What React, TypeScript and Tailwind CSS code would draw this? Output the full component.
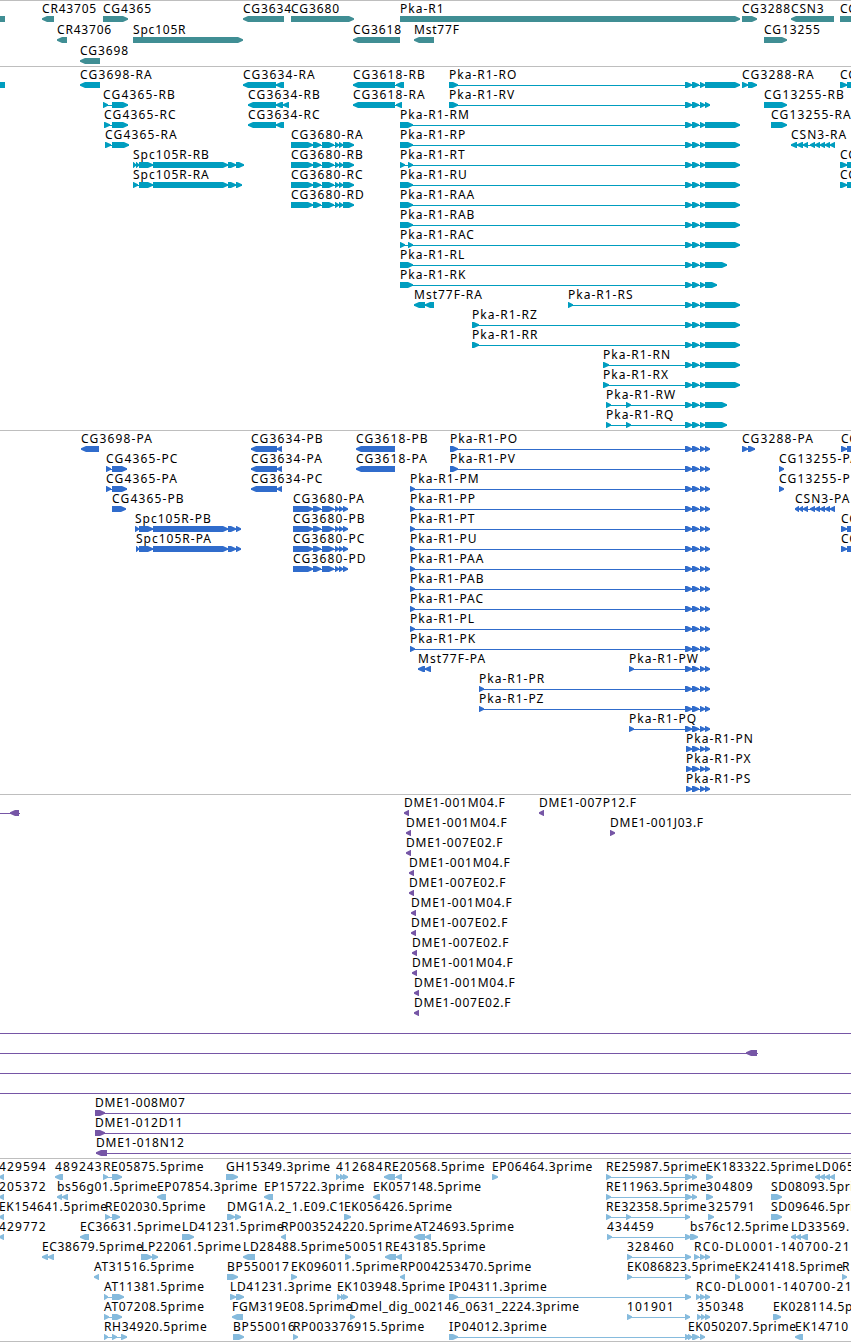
type Dir = "L" | "R";
// row, direction, label, exon coordinates (pairs), optional line span
type Feature = [number, Dir, string, number[], [number, number]?];

interface TrackProps {
  features: Feature[];
  rows: number;
  color: string;
  height: string;
  rowHeight: string;
}

const WIDTH = 851;

const genes: Feature[] = [
  [0, "L", "", [-10, 5]],
  [0, "L", "CR43705", [42, 54]],
  [0, "R", "CG4365", [103, 128]],
  [0, "L", "CG3634", [243, 284]],
  [0, "R", "CG3680", [291, 354]],
  [0, "R", "Pka-R1", [400, 740]],
  [0, "R", "CG3288", [742, 757]],
  [0, "L", "CSN3", [791, 834]],
  [0, "R", "CG", [840, 880]],
  [1, "L", "CR43706", [57, 67]],
  [1, "R", "Spc105R", [133, 243]],
  [1, "L", "CG3618", [353, 400]],
  [1, "L", "Mst77F", [414, 434]],
  [1, "R", "CG13255", [764, 787]],
  [2, "L", "CG3698", [80, 100]],
];

// 3' exons shared by the Pka-R1 isoforms
const core = [685, 692, 692, 699, 700, 705];
const full = [...core, 705, 740];
const mid = [...core, 705, 727];
const cds = [...core, 705, 710];
const cg3680 = [291, 313, 313, 321, 322, 334, 335, 339, 339, 343, 343, 354];
const cg3680p = [293, 313, 313, 321, 322, 334, 335, 339, 339, 343, 343, 348];
const edge = [840, 847, 847, 880];
const edgeP = [841, 847, 847, 880];

const transcripts: Feature[] = [
  [0, "L", "", [-10, 5]],
  [0, "L", "CG3698-RA", [80, 100]],
  [0, "L", "CG3634-RA", [243, 276, 276, 284]],
  [0, "L", "CG3618-RB", [353, 395, 396, 404]],
  [0, "R", "Pka-R1-RO", [449, 458, ...full]],
  [0, "R", "CG3288-RA", [742, 748, 748, 757]],
  [0, "R", "CG", edge],
  [1, "R", "CG4365-RB", [103, 108, 112, 128]],
  [1, "L", "CG3634-RB", [248, 276, 276, 283, 283, 289]],
  [1, "L", "CG3618-RA", [353, 395, 396, 402]],
  [1, "R", "Pka-R1-RV", [449, 458, ...cds]],
  [1, "R", "CG13255-RB", [764, 787]],
  [2, "R", "CG4365-RC", [104, 110, 112, 128]],
  [2, "L", "CG3634-RC", [248, 276, 276, 284]],
  [2, "R", "Pka-R1-RM", [400, 413, ...full]],
  [2, "R", "CG13255-RA", [771, 787]],
  [3, "R", "CG4365-RA", [105, 111, 112, 129]],
  [3, "R", "CG3680-RA", cg3680],
  [3, "R", "Pka-R1-RP", [400, 413, ...full]],
  [3, "L", "CSN3-RA", [791, 797, 797, 803, 803, 808, 810, 815, 815, 820, 820, 825, 825, 830, 830, 835]],
  [4, "R", "Spc105R-RB", [133, 136, 136, 139, 139, 153, 153, 228, 228, 236, 236, 244]],
  [4, "R", "CG3680-RB", cg3680],
  [4, "R", "Pka-R1-RT", [400, 405, 408, 413, ...full]],
  [4, "R", "CG", edge],
  [5, "R", "Spc105R-RA", [133, 138, 139, 153, 153, 228, 228, 236, 236, 242]],
  [5, "R", "CG3680-RC", cg3680],
  [5, "R", "Pka-R1-RU", [400, 413, ...full]],
  [5, "R", "CG", edge],
  [6, "R", "CG3680-RD", cg3680],
  [6, "R", "Pka-R1-RAA", [400, 413, ...full]],
  [7, "R", "Pka-R1-RAB", [400, 413, ...full]],
  [8, "R", "Pka-R1-RAC", [400, 405, 408, 413, ...full]],
  [9, "R", "Pka-R1-RL", [400, 413, ...mid]],
  [10, "R", "Pka-R1-RK", [400, 413, ...core, 705, 717]],
  [11, "L", "Mst77F-RA", [414, 425, 425, 434]],
  [11, "R", "Pka-R1-RS", [568, 573, ...full]],
  [12, "R", "Pka-R1-RZ", [472, 479, ...full]],
  [13, "R", "Pka-R1-RR", [472, 479, ...full]],
  [14, "R", "Pka-R1-RN", [603, 609, ...full]],
  [15, "R", "Pka-R1-RX", [603, 609, ...full]],
  [16, "R", "Pka-R1-RW", [606, 611, 626, 631, ...mid]],
  [17, "R", "Pka-R1-RQ", [606, 611, 626, 631, ...mid]],
];

const proteins: Feature[] = [
  [0, "L", "CG3698-PA", [81, 99]],
  [0, "L", "CG3634-PB", [251, 277, 277, 282]],
  [0, "L", "CG3618-PB", [356, 395]],
  [0, "R", "Pka-R1-PO", [450, 458, ...cds]],
  [0, "R", "CG3288-PA", [742, 748, 748, 755]],
  [0, "R", "CG", edgeP],
  [1, "R", "CG4365-PC", [106, 111, 112, 127]],
  [1, "L", "CG3634-PA", [251, 277, 277, 282]],
  [1, "L", "CG3618-PA", [356, 395]],
  [1, "R", "Pka-R1-PV", [450, 458, ...cds]],
  [1, "R", "CG13255-PA", [779, 784]],
  [2, "R", "CG4365-PA", [106, 111, 112, 127]],
  [2, "L", "CG3634-PC", [251, 277, 277, 282]],
  [2, "R", "Pka-R1-PM", [410, 415, ...cds]],
  [2, "R", "CG13255-PB", [779, 784]],
  [3, "R", "CG4365-PB", [112, 126]],
  [3, "R", "CG3680-PA", cg3680p],
  [3, "R", "Pka-R1-PP", [410, 415, ...cds]],
  [3, "L", "CSN3-PA", [795, 799, 799, 803, 803, 808, 810, 815, 815, 820, 820, 825, 825, 830, 830, 835]],
  [4, "R", "Spc105R-PB", [135, 139, 139, 153, 153, 228, 228, 236, 236, 241]],
  [4, "R", "CG3680-PB", cg3680p],
  [4, "R", "Pka-R1-PT", [410, 415, ...cds]],
  [4, "R", "CG", edgeP],
  [5, "R", "Spc105R-PA", [136, 139, 139, 153, 153, 228, 228, 236, 236, 241]],
  [5, "R", "CG3680-PC", cg3680p],
  [5, "R", "Pka-R1-PU", [410, 415, ...cds]],
  [5, "R", "CG", edgeP],
  [6, "R", "CG3680-PD", cg3680p],
  [6, "R", "Pka-R1-PAA", [410, 415, ...cds]],
  [7, "R", "Pka-R1-PAB", [410, 415, ...cds]],
  [8, "R", "Pka-R1-PAC", [410, 415, ...cds]],
  [9, "R", "Pka-R1-PL", [410, 415, ...cds]],
  [10, "R", "Pka-R1-PK", [410, 415, ...cds]],
  [11, "L", "Mst77F-PA", [418, 425, 425, 431]],
  [11, "R", "Pka-R1-PW", [629, 634, ...cds]],
  [12, "R", "Pka-R1-PR", [479, 484, ...cds]],
  [13, "R", "Pka-R1-PZ", [479, 484, ...cds]],
  [14, "R", "Pka-R1-PQ", [629, 634, ...cds]],
  [15, "R", "Pka-R1-PN", [686, ...cds.slice(1)]],
  [16, "R", "Pka-R1-PX", [686, ...cds.slice(1)]],
  [17, "R", "Pka-R1-PS", [686, ...cds.slice(1)]],
];

const clones: Feature[] = [
  [0, "L", "", [10, 19], [0, 20]],
  [0, "L", "DME1-001M04.F", [404, 409]],
  [0, "L", "DME1-007P12.F", [539, 544]],
  [1, "L", "DME1-001M04.F", [406, 411]],
  [1, "R", "DME1-001J03.F", [610, 615]],
  [2, "L", "DME1-007E02.F", [406, 411]],
  [3, "L", "DME1-001M04.F", [409, 414]],
  [4, "L", "DME1-007E02.F", [409, 414]],
  [5, "L", "DME1-001M04.F", [411, 416]],
  [6, "L", "DME1-007E02.F", [411, 416]],
  [7, "L", "DME1-007E02.F", [412, 417]],
  [8, "L", "DME1-001M04.F", [412, 417]],
  [9, "L", "DME1-001M04.F", [414, 419]],
  [10, "L", "DME1-007E02.F", [414, 419]],
  [11, "L", "", [], [0, WIDTH]],
  [12, "L", "", [746, 757], [0, 758]],
  [13, "L", "", [], [0, WIDTH]],
  [14, "L", "", [], [0, WIDTH]],
  [15, "R", "DME1-008M07", [95, 105], [95, WIDTH]],
  [16, "R", "DME1-012D11", [95, 105], [95, WIDTH]],
  [17, "L", "DME1-018N12", [96, 107], [96, WIDTH]],
];

const ests: Feature[] = [
  [0, "L", "429594", [-1, 4]],
  [0, "L", "489243", [55, 63]],
  [0, "R", "RE05875.5prime", [103, 108, 112, 122]],
  [0, "R", "GH15349.3prime", [226, 238]],
  [0, "R", "412684", [336, 340, 340, 344, 343, 348]],
  [0, "L", "RE20568.5prime", [384, 395, 396, 402]],
  [0, "R", "EP06464.3prime", [492, 498]],
  [0, "R", "RE25987.5prime", [606, 611, 685, 692, 692, 697]],
  [0, "R", "EK183322.5prime", [706, 713]],
  [0, "L", "LD065", [815, 820, 820, 825, 825, 830, 830, 835]],
  [1, "L", "205372", [-1, 4]],
  [1, "L", "bs56g01.5prime", [57, 62, 62, 68]],
  [1, "L", "EP07854.3prime", [157, 166]],
  [1, "L", "EP15722.3prime", [264, 273]],
  [1, "L", "EK057148.5prime", [373, 380]],
  [1, "R", "RE11963.5prime", [606, 611, 685, 692, 692, 697]],
  [1, "R", "304809", [706, 713]],
  [1, "R", "SD08093.5prime", [771, 782]],
  [2, "L", "EK154641.5prime", [-1, 4]],
  [2, "R", "RE02030.5prime", [105, 110, 112, 120]],
  [2, "R", "DMG1A.2_1.E09.C1", [227, 235, 235, 241]],
  [2, "R", "EK056426.5prime", [344, 351]],
  [2, "R", "RE32358.5prime", [606, 611, 626, 631, 685, 690]],
  [2, "R", "325791", [708, 714]],
  [2, "R", "SD09646.5prime", [771, 782]],
  [3, "L", "429772", [-1, 4]],
  [3, "L", "EC36631.5prime", [80, 89]],
  [3, "R", "LD41231.5prime", [182, 194]],
  [3, "L", "RP003524220.5prime", [281, 286]],
  [3, "L", "AT24693.5prime", [414, 425, 425, 431]],
  [3, "R", "434459", [607, 612, 685, 691]],
  [3, "R", "bs76c12.5prime", [690, 698]],
  [3, "L", "LD33569.", [791, 796, 796, 801, 801, 808]],
  [4, "L", "EC38679.5prime", [42, 48, 48, 54]],
  [4, "R", "LP22061.5prime", [141, 152, 152, 158]],
  [4, "L", "LD28488.5prime", [243, 255]],
  [4, "R", "50051", [345, 351]],
  [4, "L", "RE43185.5prime", [385, 396, 396, 402]],
  [4, "R", "328460", [627, 632, 685, 691]],
  [4, "R", "RC0-DL0001-140700-21", [694, 699, 700, 705, 705, 710]],
  [5, "L", "AT31516.5prime", [94, 99]],
  [5, "R", "BP550017", [227, 238]],
  [5, "R", "EK096011.5prime", [291, 297]],
  [5, "L", "RP004253470.5prime", [400, 405]],
  [5, "R", "EK086823.5prime", [627, 632, 685, 691]],
  [5, "R", "EK241418.5prime", [735, 740]],
  [5, "R", "R", [842, 847]],
  [6, "R", "AT11381.5prime", [104, 108, 112, 124]],
  [6, "R", "LD41231.3prime", [230, 236, 236, 244]],
  [6, "R", "EK103948.5prime", [337, 341, 341, 344, 343, 348]],
  [6, "R", "IP04311.3prime", [449, 458, 685, 691]],
  [6, "R", "RC0-DL0001-140700-21", [696, 700, 700, 705, 705, 710]],
  [7, "R", "AT07208.5prime", [104, 109, 112, 122]],
  [7, "L", "FGM319E08.5prime", [232, 243]],
  [7, "R", "Dmel_dig_002146_0631_2224.3prime", [350, 355]],
  [7, "R", "101901", [627, 632, 685, 690]],
  [7, "R", "350348", [697, 701, 701, 705, 705, 710]],
  [7, "R", "EK028114.5prime", [773, 781]],
  [8, "R", "RH34920.5prime", [104, 108, 112, 117, 121, 127]],
  [8, "R", "BP550016", [233, 244]],
  [8, "R", "RP003376915.5prime", [293, 298]],
  [8, "R", "IP04012.3prime", [449, 458, 685, 690]],
  [8, "R", "EK050207.5prime", [688, 692, 692, 699, 700, 705]],
  [8, "L", "EK14710", [795, 803]],
];

function arrow(x0: number, x1: number, dir: Dir) {
  const head = Math.min(x1 - x0 - 0.5, 5);
  if (dir === "R") {
    return `M${x0} 0H${x1 - head}L${x1} 2.2V3.8L${x1 - head} 6H${x0}Z`;
  }
  return `M${x1} 0H${x0 + head}L${x0} 2.2V3.8L${x0 + head} 6H${x1}Z`;
}

function tracking(label: string) {
  if (label.startsWith("RC0")) return "tracking-[1.3px]";
  if (/^\d+$/.test(label)) return "tracking-[1.1px]";
  if (/^CG\d+-/.test(label)) return "tracking-[1.15px]";
  if (/^(Pka|CSN3|Spc|Mst).*-/.test(label)) return "tracking-[1px]";
  if (label.startsWith("CG")) return "tracking-[0.9px]";
  if (label.startsWith("DME1")) return "tracking-[0.75px]";
  if (label.endsWith("prime")) return "tracking-[0.66px]";
  return "tracking-[0.8px]";
}

function Glyph({ feature }: { feature: Feature }) {
  const [, dir, , exons, span] = feature;
  const start = span ? span[0] : exons[0];
  const end = span ? span[1] : exons[exons.length - 1];
  const paths: string[] = [];
  for (let i = 0; i < exons.length; i += 2) {
    paths.push(arrow(exons[i], exons[i + 1], dir));
  }
  return (
    <g fill="currentColor">
      {(span || exons.length > 2) && <rect x={start} y={3} width={end - start} height={1} />}
      {paths.length > 0 && <path d={paths.join("")} />}
    </g>
  );
}

function Track({ features, rows, color, height, rowHeight }: TrackProps) {
  return (
    <section className={`border-t border-[#bebebe] overflow-hidden ${height} ${color}`}>
      {Array.from({ length: rows }, (_, row) => {
        const items = features.filter((f) => f[0] === row);
        return (
          <div key={row} className={`relative flex flex-col pt-[15px] ${rowHeight}`}>
            <svg width={WIDTH} height={6} className="block shrink-0">
              {items.map((f, i) => (
                <Glyph key={i} feature={f} />
              ))}
            </svg>
            {items.filter((f) => f[2]).map((f, i) => (
              <span
                key={i}
                className={`absolute top-0 leading-4 whitespace-nowrap text-black ${tracking(f[2])}`}
                style={{ left: f[3][0] }}
              >
                {f[2]}
              </span>
            ))}
          </div>
        );
      })}
    </section>
  );
}

function App() {
  return (
    <main className="w-[851px] h-[1342px] overflow-hidden bg-white text-[12px] font-['Noto_Sans',sans-serif]">
      <Track features={genes} rows={3} color="text-[#408e94]" height="h-[66px]" rowHeight="h-[21px]" />
      <Track features={transcripts} rows={18} color="text-[#009dbf]" height="h-[364px]" rowHeight="h-5" />
      <Track features={proteins} rows={18} color="text-[#306ccc]" height="h-[364px]" rowHeight="h-5" />
      <Track features={clones} rows={18} color="text-[#7656a6]" height="h-[364px]" rowHeight="h-5" />
      <Track features={ests} rows={9} color="text-[#86bbdd]" height="h-[183px]" rowHeight="h-5" />
      <div className="h-px bg-[#bebebe]" />
    </main>
  );
}

export default App;
